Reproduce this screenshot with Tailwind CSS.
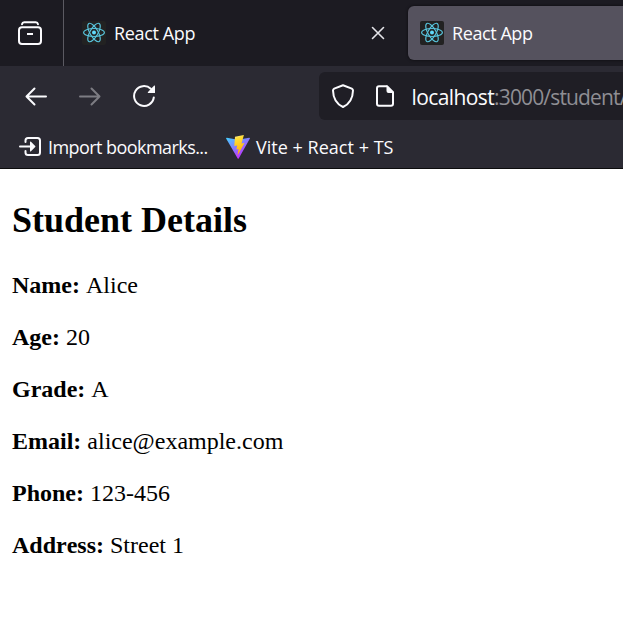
<!DOCTYPE html>
<html lang="en">
<head>
<meta charset="utf-8">
<title>React App</title>
<script src="https://cdn.jsdelivr.net/npm/@tailwindcss/browser@4"></script>
</head>
<body class="w-[623px] h-[640px] overflow-hidden bg-white font-['Open_Sans',sans-serif] text-[#fbfbfe]">
<svg class="hidden">
  <symbol id="react" viewBox="0 0 24 24">
    <rect width="24" height="24" rx="2" fill="#222"/>
    <g fill="none" stroke="#58c4dc" stroke-width="1.15">
      <ellipse cx="12" cy="11.5" rx="10.4" ry="4"/>
      <ellipse cx="12" cy="11.5" rx="10.4" ry="4" transform="rotate(60 12 11.5)"/>
      <ellipse cx="12" cy="11.5" rx="10.4" ry="4" transform="rotate(120 12 11.5)"/>
    </g>
    <circle cx="12" cy="11.5" r="2" fill="#61dafb"/>
  </symbol>
</svg>
<header>
  <div class="flex h-[66px] bg-[#1c1b22]">
    <div class="w-16 h-full shrink-0 border-r border-[#5b5a62] pl-[18px] pt-[21px]">
      <svg class="size-6" viewBox="0 0 24 24" fill="none" stroke="#fbfbfe" stroke-width="2" stroke-linecap="round">
        <path d="M4 3.2C4.3 1.8 5 1.3 6.2 1.3H17.8C19 1.3 19.7 1.8 20 3.2"/>
        <rect x="1" y="6.3" width="22" height="16.7" rx="3"/>
        <path stroke-linecap="butt" d="M9 13H15"/>
      </svg>
    </div>
    <div class="flex w-[344px] shrink-0 items-center pl-[18px] pr-[23px]">
      <svg class="size-6 shrink-0"><use href="#react"/></svg>
      <span class="ml-2 grow text-[18px] leading-6 tracking-[-0.36px] whitespace-nowrap">React App</span>
      <svg class="size-[14px]" viewBox="0 0 14 14" stroke="#e4e4e9" stroke-width="1.6" stroke-linecap="round"><path d="M1.5 1.5L12.5 12.5M12.5 1.5L1.5 12.5"/></svg>
    </div>
    <div class="mt-1.5 flex h-[54px] grow items-center rounded-l-md bg-[#55525e] pl-3 shadow-[0_0_3px_#000a]">
      <svg class="size-6 shrink-0"><use href="#react"/></svg>
      <span class="ml-2 text-[18px] leading-6 tracking-[-0.42px] whitespace-nowrap">React App</span>
    </div>
  </div>
  <div class="h-[103px] border-b border-[#0c0c0d] bg-[#2b2a33]">
    <nav class="flex h-[60px] items-center">
      <div class="flex w-[319px] shrink-0 items-center gap-[30px] pl-6">
        <svg class="size-6" viewBox="0 0 24 24" fill="none" stroke="#fbfbfe" stroke-width="2" stroke-linecap="round" stroke-linejoin="round"><path d="M22 12.5H2.5M10.5 4.5L2.5 12.5L10.5 20.5"/></svg>
        <svg class="size-6" viewBox="0 0 24 24" fill="none" stroke="#7d7c83" stroke-width="2" stroke-linecap="round" stroke-linejoin="round"><path d="M2 12.5H21.5M13.5 4.5L21.5 12.5L13.5 20.5"/></svg>
        <svg class="size-6" viewBox="0 0 24 24" fill="none" stroke="#fbfbfe" stroke-width="2" stroke-linecap="round"><path d="M21.8 13.5A9.9 9.9 0 1 1 18.8 4.8"/><path fill="#fbfbfe" stroke="none" d="M22.2 1.6Q23 1.3 23 2.2V9H16.2Q15.3 8.8 16 8Z"/></svg>
      </div>
      <div class="flex h-12 grow items-center overflow-hidden rounded-l-md bg-[#1f1e25] pl-3">
        <svg class="size-6 shrink-0" viewBox="0 0 24 24" fill="none" stroke="#fbfbfe" stroke-width="2" stroke-linejoin="round"><path d="M12 1.2L20.8 4.6C21.6 5 22 5.6 22 6.5C21.8 14.5 18.5 20 12 23C5.500 20 2.200 14.5 2 6.500C2 5.600 2.400 5 3.200 4.600Z"/></svg>
        <svg class="ml-[18px] size-6 shrink-0" viewBox="0 0 24 24" fill="none" stroke="#fbfbfe" stroke-width="2" stroke-linejoin="round"><path d="M14 2.2H6Q4 2.200 4 4.200V19.800Q4 21.800 6 21.800H18Q20 21.800 20 19.800V8.500"/><path fill="#fbfbfe" stroke="none" d="M13.500 1.200H14.500L21 7.700V9H15.500Q13.500 9 13.500 7Z"/></svg>
        <span class="ml-[14.5px] pt-0.5 text-[21px] leading-8 tracking-[-0.85px] whitespace-nowrap text-[#8f8e94]"><span class="tracking-[-0.6px] text-[#fbfbfe]">localhost</span>:3000/student/</span>
      </div>
    </nav>
    <div class="flex h-[42px] items-center pl-[18px] text-[18px] leading-6 whitespace-nowrap">
      <svg class="size-6 shrink-0" viewBox="0 0 24 24" fill="none" stroke="#fbfbfe" stroke-width="2" stroke-linecap="round"><path d="M7.500 7V5.500Q7.500 3 10 3H19.500Q22 3 22 5.500V17.500Q22 20 19.500 20H10Q7.500 20 7.500 17.500V16M2 11.500H14"/><path fill="#fbfbfe" stroke="none" d="M12 7Q12 6 13 6.700L17.200 11Q17.700 11.500 17.200 12L13 16.300Q12 17 12 16Z"/></svg>
      <span class="ml-1.5 w-[160px] tracking-[-0.56px]">Import bookmarks...</span>
      <svg class="ml-[18px] size-6 shrink-0" viewBox="0 0 24 24">
        <defs>
          <linearGradient id="v" x1="0" y1="0" x2=".6" y2=".9"><stop stop-color="#41d1ff"/><stop offset="1" stop-color="#bd34fe"/></linearGradient>
          <linearGradient id="b" x1=".4" y1="0" x2=".6" y2="1"><stop stop-color="#ffea83"/><stop offset=".15" stop-color="#ffdd35"/><stop offset="1" stop-color="#ffa800"/></linearGradient>
        </defs>
        <path fill="url(#v)" d="M23.900 3.500L12.700 23.500Q12.200 24 11.700 23.500L.1 3.500Q-.1 2.700 .8 2.700L12 4.700L23.200 2.700Q24.100 2.700 23.900 3.500Z"/>
        <path fill="url(#b)" d="M17.900 0L9 1.700L8.300 11L11.200 10.400L10.400 14.600L12.500 14L11.500 20.500L18.500 8L15.500 8.600Z"/>
      </svg>
      <span class="ml-1.5 tracking-[0.02px]">Vite + React + TS</span>
    </div>
  </div>
</header>
<main class="px-3 pt-[31px] font-['Liberation_Serif',serif] text-2xl leading-7 text-black [font-kerning:none]">
  <h2 class="mb-[31px] text-4xl leading-10 font-bold">Student Details</h2>
  <div class="flex flex-col gap-6">
    <p><strong>Name:</strong> Alice</p>
    <p><strong>Age:</strong> 20</p>
    <p><strong>Grade:</strong> A</p>
    <p><strong>Email:</strong> alice@example.com</p>
    <p><strong>Phone:</strong> 123-456</p>
    <p><strong>Address:</strong> Street 1</p>
  </div>
</main>
</body>
</html>
